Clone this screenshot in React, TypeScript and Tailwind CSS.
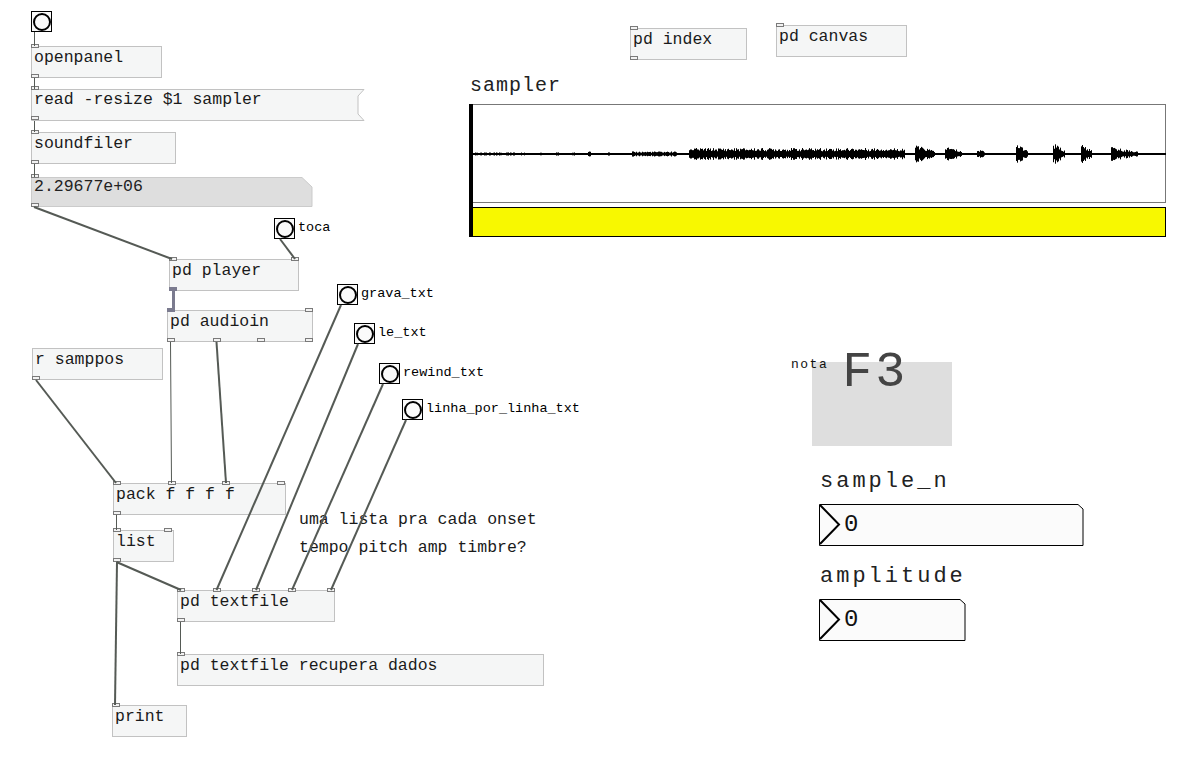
import React from "react"

const mono = { fontFamily: '"Liberation Mono", "Courier New", monospace' }

interface ObjProps {
    x?: number
    y?: number
    w: number
    text: string
    inlets?: number[]
    outlets?: number[]
    sigIn?: boolean
    sigOut?: boolean
    className?: string
}

const Port = ({ left, top, filled }: { left: number; top: number; filled?: boolean }) => (
    <div
        className={filled ? "absolute h-[4px] w-[8px] bg-[#7b7b8f]" : "absolute h-[4px] w-[8px] border border-[#7a7a7a] bg-[#f2f2f2]"}
        style={{ left, top }}
    />
)

// a pd object box; x/y given -> placed on the canvas, otherwise in flow
const Obj = ({ x, y, w, text, inlets = [0], outlets = [], sigIn, sigOut, className = "" }: ObjProps) => (
    <div
        className={(x === undefined ? "relative " : "absolute ") + "h-[32px] shrink-0 border border-[#c2c2c2] bg-[#f5f6f6] " + className}
        style={x === undefined ? { width: w } : { left: x, top: y, width: w }}
    >
        <div className="absolute left-[2px] top-[1px] whitespace-pre text-[16.5px] leading-[20px] text-[#1a1a1a]" style={mono}>
            {text}
        </div>
        {inlets.map((o, i) => (
            <Port key={"i" + i} left={o - 1} top={-3} filled={sigIn && i === 0} />
        ))}
        {outlets.map((o, i) => (
            <Port key={"o" + i} left={o - 1} top={27} filled={sigOut && i === 0} />
        ))}
    </div>
)

const Bang = ({ x, y, label }: { x?: number; y?: number; label?: string }) => (
    <div
        className={(x === undefined ? "relative" : "absolute") + " flex items-center"}
        style={x === undefined ? undefined : { left: x, top: y }}
    >
        <div className="flex h-[21px] w-[21px] items-center justify-center border border-black bg-[#fafafa]">
            <div className="h-[18px] w-[18px] rounded-full border-2 border-black" />
        </div>
        {label && (
            <span className="ml-[3px] -mt-[2px] whitespace-pre text-[13.5px] leading-none text-black" style={mono}>
                {label}
            </span>
        )}
    </div>
)

const Msg = ({ w, text, className = "" }: { w: number; text: string; className?: string }) => (
    <div className={"relative h-[32px] " + className} style={{ width: w }}>
        <svg className="absolute left-0 top-0" width={w + 1} height={33}>
            <polygon
                points={`0.5,0.5 ${w},0.5 ${w - 6},7 ${w - 6},25 ${w},31.5 0.5,31.5`}
                fill="#f5f6f6"
                stroke="#c2c2c2"
            />
        </svg>
        <div className="absolute left-[3px] top-[1px] whitespace-pre text-[16.5px] leading-[20px] text-[#1a1a1a]" style={mono}>
            {text}
        </div>
        <Port left={0} top={-3} />
        <Port left={0} top={27} />
    </div>
)

const Atom = ({ w, text, className = "" }: { w: number; text: string; className?: string }) => (
    <div className={"relative h-[30px] " + className} style={{ width: w }}>
        <svg className="absolute left-0 top-0" width={w + 1} height={31}>
            <polygon points={`0.5,0.5 ${w - 10},0.5 ${w},10 ${w},29.5 0.5,29.5`} fill="#dedede" stroke="#cbcbcb" />
        </svg>
        <div className="absolute left-[3px] top-[0px] whitespace-pre text-[16.5px] leading-[20px] text-[#222]" style={mono}>
            {text}
        </div>
        <Port left={0} top={-3} />
        <Port left={0} top={26} />
    </div>
)

const NumBox = ({ w, label }: { w: number; label: string }) => (
    <div className="flex flex-col">
        <div className="ml-[1px] whitespace-pre text-[22px] leading-[24px] tracking-[3px] text-[#222]" style={mono}>
            {label}
        </div>
        <div className="relative mt-[10px] h-[42px]" style={{ width: w }}>
            <svg className="absolute left-0 top-0" width={w + 1} height={43}>
                <polygon points={`0.5,0.5 ${w - 5},0.5 ${w},5 ${w},41.5 0.5,41.5`} fill="#fbfbfb" stroke="#000" />
                <polyline points="1,1 20,20.5 1,40" fill="none" stroke="#000" strokeWidth={2} />
            </svg>
            <div className="absolute left-[25px] top-[9px] text-[24px] leading-[24px] text-[#111]" style={mono}>
                0
            </div>
        </div>
    </div>
)

// waveform of the "sampler" array, drawn from a fixed envelope
const segs: [number, number, number, boolean][] = [
    [474, 524, 1.6, false],
    [539, 542, 2, false],
    [556, 558, 2, false],
    [572, 574, 2, false],
    [588, 590, 2.5, false],
    [608, 610, 2, false],
    [632, 676, 2.6, false],
    [689, 904, 6, false],
    [915, 934, 9, true],
    [945, 961, 8, true],
    [977, 984, 6, true],
    [1016, 1027, 11, true],
    [1053, 1064, 11, true],
    [1081, 1091, 10, true],
    [1111, 1137, 7, true],
]

const rnd = (n: number) => {
    const s = Math.sin(n * 12.9898) * 43758.5453
    return s - Math.floor(s)
}

const wavePath = () => {
    let d = ""
    for (const [a, b, amp, decay] of segs) {
        for (let x = a; x <= b; x++) {
            const t = (x - a) / Math.max(1, b - a)
            let v = amp * (0.45 + 0.55 * rnd(x))
            if (decay) v *= 1 - t * 0.6
            if (v < 1.2) continue
            const lx = x - 469 + 0.5
            d += `M${lx} ${50 - v}V${50 + v}`
        }
    }
    return d
}

const Sampler = () => (
    <div className="absolute left-[469px] top-[76px] flex flex-col">
        <div className="ml-[1px] whitespace-pre text-[20px] leading-[20px] tracking-[1px] text-[#222]" style={mono}>
            sampler
        </div>
        <div className="relative mt-[8px] h-[99px] w-[697px] border border-[#777] bg-white">
            <svg className="absolute -left-[1px] -top-[1px]" width={697} height={99}>
                <line x1={3} y1={50} x2={697} y2={50} stroke="#000" strokeWidth={2} />
                <path d={wavePath()} stroke="#000" strokeWidth={1} fill="none" />
            </svg>
        </div>
        <div className="mt-[4px] h-[30px] w-[697px] border border-black bg-[#f8f800]" />
        <div className="absolute left-0 top-[28px] h-[133px] w-[4px] bg-black" />
    </div>
)

const wires: [number, number, number, number, number][] = [
    [34.5, 32, 34.5, 46, 1],
    [34.5, 78, 34.5, 89, 1],
    [34.5, 121, 34.5, 132, 1],
    [34.5, 164, 34.5, 177, 1],
    [34, 207, 172, 259, 2],
    [280, 239, 295, 259, 2],
    [170.5, 342, 171.5, 483, 1],
    [216.5, 342, 226, 483, 2],
    [36, 380, 116, 483, 2],
    [116.5, 515, 116.5, 530, 1],
    [116.5, 562, 181, 590, 2],
    [117, 562, 115, 705, 2],
    [180.5, 622, 180.5, 654, 1],
    [341, 305, 216.5, 590, 2],
    [358, 344, 256, 590, 2],
    [383, 384, 292, 590, 2],
    [406, 420, 331, 590, 2],
]

export default function App() {
    return (
        <div className="relative h-[760px] w-[1202px] overflow-hidden bg-white">
            {/* file loading chain */}
            <div className="absolute left-[31px] top-[11px] flex flex-col items-start">
                <Bang />
                <Obj w={131} text="openpanel" outlets={[0]} className="mt-[14px]" />
                <Msg w={333} text="read -resize $1 sampler" className="mt-[11px]" />
                <Obj w={145} text="soundfiler" outlets={[0]} className="mt-[11px]" />
                <Atom w={281} text="2.29677e+06" className="mt-[13px]" />
            </div>

            <Bang x={274} y={218} label="toca" />
            <Obj x={169} y={259} w={130} text="pd player" inlets={[0, 122]} outlets={[0]} sigOut />
            <Obj x={167} y={310} w={146} text="pd audioin" inlets={[0, 138]} outlets={[0, 46, 90, 138]} sigIn />

            <Bang x={337} y={284} label="grava_txt" />
            <Bang x={354} y={323} label="le_txt" />
            <Bang x={379} y={363} label="rewind_txt" />
            <Bang x={402} y={399} label="linha_por_linha_txt" />

            <Obj x={32} y={348} w={131} text="r samppos" inlets={[]} outlets={[0]} />
            <Obj x={113} y={483} w={173} text="pack f f f f" inlets={[0, 55, 109, 164]} outlets={[0]} />
            <Obj x={113} y={530} w={61} text="list" inlets={[0, 51]} outlets={[0]} />
            <Obj x={177} y={590} w={158} text="pd textfile" inlets={[0, 36, 75, 111, 150]} outlets={[0]} />
            <Obj x={177} y={654} w={367} text="pd textfile recupera dados" />
            <Obj x={112} y={705} w={75} text="print" />

            <div className="absolute left-[299px] top-[510px] flex flex-col gap-[8px] whitespace-pre text-[16.5px] leading-[20px] text-[#1a1a1a]" style={mono}>
                <span>uma lista pra cada onset</span>
                <span>tempo pitch amp timbre?</span>
            </div>

            <Obj x={630} y={28} w={117} text="pd index" outlets={[0]} />
            <Obj x={776} y={25} w={131} text="pd canvas" />

            <Sampler />

            {/* note display */}
            <div className="absolute left-[791px] top-[348px] flex items-start">
                <span className="relative z-10 mt-[10px] text-[13px] leading-[14px] tracking-[1.5px] text-[#111]" style={mono}>
                    nota
                </span>
                <div className="relative ml-[-16px] mt-[14px] h-[84px] w-[140px] bg-[#dedede]">
                    <span className="absolute left-[30px] -top-[14px] text-[50px] leading-[50px] tracking-[3px] text-[#444]" style={mono}>
                        F3
                    </span>
                </div>
            </div>

            <div className="absolute left-[819px] top-[470px] flex flex-col gap-[19px]">
                <NumBox w={264} label="sample_n" />
                <NumBox w={146} label="amplitude" />
            </div>

            <svg className="pointer-events-none absolute left-0 top-0" width={1202} height={760}>
                {wires.map(([x1, y1, x2, y2, sw], i) => (
                    <line key={i} x1={x1} y1={y1} x2={x2} y2={y2} stroke="#555a55" strokeWidth={sw} />
                ))}
                <line x1={173.5} y1={291} x2={173.5} y2={310} stroke="#7b7b8f" strokeWidth={3} />
            </svg>
        </div>
    )
}
